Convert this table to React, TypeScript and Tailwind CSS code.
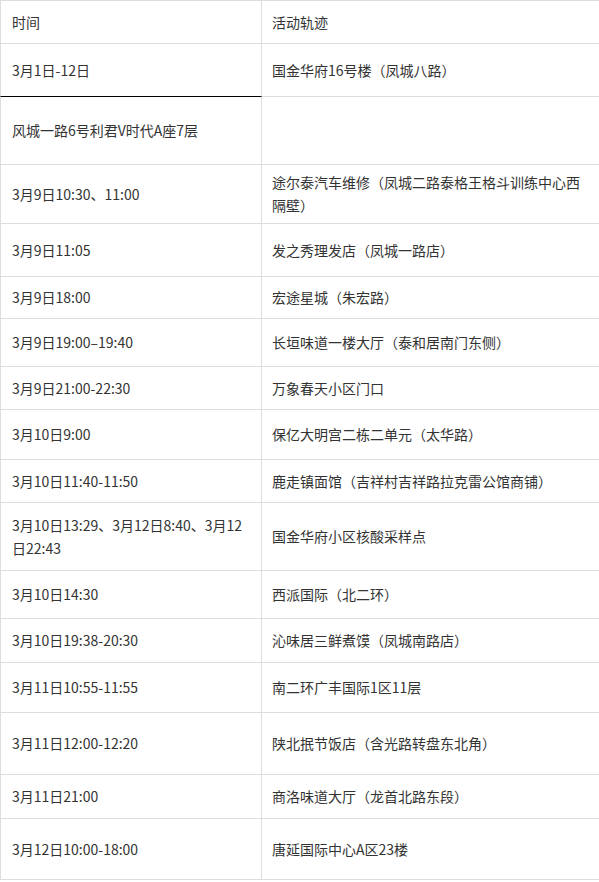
import React from 'react'

type Row = { time: React.ReactNode; place: React.ReactNode; h: string }

const rows: Row[] = [
  { time: '3月1日-12日', place: '国金华府16号楼（凤城八路）', h: 'h-[53px]' },
  { time: '风城一路6号利君V时代A座7层', place: '', h: 'h-[68px]' },
  { time: '3月9日10:30、11:00', place: '途尔泰汽车维修（凤城二路泰格王格斗训练中心西隔壁）', h: 'h-[59px]' },
  { time: '3月9日11:05', place: '发之秀理发店（凤城一路店）', h: 'h-[53px]' },
  { time: '3月9日18:00', place: '宏途星城（朱宏路）', h: 'h-[42px]' },
  { time: '3月9日19:00–19:40', place: '长垣味道一楼大厅（泰和居南门东侧）', h: 'h-[48px]' },
  { time: '3月9日21:00-22:30', place: '万象春天小区门口', h: 'h-[43px]' },
  { time: '3月10日9:00', place: '保亿大明宫二栋二单元（太华路）', h: 'h-[50px]' },
  { time: '3月10日11:40-11:50', place: '鹿走镇面馆（吉祥村吉祥路拉克雷公馆商铺）', h: 'h-[43px]' },
  { time: '3月10日13:29、3月12日8:40、3月12日22:43', place: '国金华府小区核酸采样点', h: 'h-[68px]' },
  { time: '3月10日14:30', place: '西派国际（北二环）', h: 'h-[48px]' },
  { time: '3月10日19:38-20:30', place: '沁味居三鲜煮馍（凤城南路店）', h: 'h-[44px]' },
  { time: '3月11日10:55-11:55', place: '南二环广丰国际1区11层', h: 'h-[50px]' },
  { time: '3月11日12:00-12:20', place: '陕北抿节饭店（含光路转盘东北角）', h: 'h-[62px]' },
  { time: '3月11日21:00', place: '商洛味道大厅（龙首北路东段）', h: 'h-[44px]' },
  { time: '3月12日10:00-18:00', place: '唐延国际中心A区23楼', h: 'h-[61px]' },
]

export default function App() {
  return (
    <div className="w-[599px] bg-white font-['Noto_Sans_CJK_SC',sans-serif] text-[14px] leading-[23px] text-[#333]">
      <table className="w-full table-fixed border-separate border-spacing-0">
        <colgroup>
          <col className="w-[262px]" />
          <col />
        </colgroup>
        <tbody>
          <tr className="h-[44px]">
            <td className="border-y border-x border-[#dddddd] px-[11px] align-middle">时间</td>
            <td className="border-y border-[#dddddd] px-[10px] align-middle">活动轨迹</td>
          </tr>
          {rows.map((r, i) => (
            <tr key={i} className={r.h}>
              <td
                className={`border-x border-b px-[11px] align-middle ${
                  i === 0 ? 'border-x-[#dddddd] border-b-black' : 'border-[#dddddd]'
                }`}
              >
                {r.time}
              </td>
              <td className="border-b border-[#dddddd] px-[10px] align-middle">{r.place}</td>
            </tr>
          ))}
        </tbody>
      </table>
    </div>
  )
}
